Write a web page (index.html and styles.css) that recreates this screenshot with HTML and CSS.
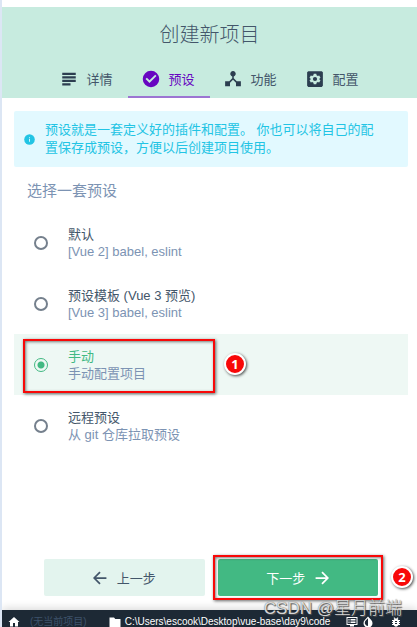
FILE: index.html
```html
<!DOCTYPE html>
<html lang="zh-CN">
<head>
  <meta charset="UTF-8" />
  <meta name="viewport" content="width=device-width, initial-scale=1.0" />
  <title>创建新项目</title>
  <link rel="stylesheet" href="styles.css">
</head>
<body>
  <div class="app">
    <header class="header">
      <h1>创建新项目</h1>
      <nav class="tabs">
        <a class="tab" href="#details">
          <svg viewBox="0 0 24 24"><path d="M3 3.500h18v3H3zM3 8.200h18v3H3zM3 12.900h18v3H3zM3 17.600h11v3H3z"/></svg>
          <span>详情</span>
        </a>
        <a class="tab active" href="#presets">
          <svg viewBox="0 0 24 24"><path d="M12 1a11 11 0 1 0 0 22 11 11 0 0 0 0-22zm-2 16.300l-5.300-5.200 1.800-1.800 3.500 3.400 7.600-7.400 1.700 1.800z"/></svg>
          <span>预设</span>
        </a>
        <a class="tab" href="#features">
          <svg viewBox="0 0 24 24"><path d="M17 15l-4-4V8.500a3.600 3.600 0 1 0-2 0V11l-4 4H1.500v6.500H8V17l4-4 4 4v4.500h6.500V15z"/></svg>
          <span>功能</span>
        </a>
        <a class="tab" href="#config">
          <svg viewBox="0 0 24 24"><path fill-rule="evenodd" d="M3 1.500h18l1.500 1.500v18L21 22.500H3L1.500 21V3zM10.300 5l-.4 2-1.600.9-1.900-.7-1.700 3 1.500 1.300v1l-1.500 1.300 1.700 3 1.900-.7 1.600.9.4 2h3.400l.4-2 1.600-.9 1.900.7 1.700-3-1.500-1.300v-1l1.500-1.300-1.700-3-1.900.7-1.600-.9-.4-2zM12 9.200a2.800 2.800 0 1 1 0 5.600 2.800 2.800 0 0 1 0-5.600z"/></svg>
          <span>配置</span>
        </a>
      </nav>
    </header>

    <main class="content">
      <div class="info">
        <svg viewBox="0 0 24 24"><circle cx="12" cy="12" r="11.500"/><path class="mark" d="M11 7h2v2h-2zM11 11h2v6h-2z"/></svg>
        <p>预设就是一套定义好的插件和配置。 你也可以将自己的配置保存成预设，方便以后创建项目使用。</p>
      </div>

      <h2 id="preset-title">选择一套预设</h2>

      <div class="presets" role="radiogroup" aria-labelledby="preset-title">
        <label class="preset">
          <input type="radio" name="preset">
          <span class="text"><span class="name">默认</span><span class="desc">[Vue 2] babel, eslint</span></span>
        </label>
        <label class="preset">
          <input type="radio" name="preset">
          <span class="text"><span class="name">预设模板 (Vue 3 预览)</span><span class="desc">[Vue 3] babel, eslint</span></span>
        </label>
        <label class="preset selected">
          <input type="radio" name="preset" checked>
          <span class="text"><span class="name">手动</span><span class="desc">手动配置项目</span></span>
          <span class="frame"></span>
          <span class="step">1</span>
        </label>
        <label class="preset">
          <input type="radio" name="preset">
          <span class="text"><span class="name">远程预设</span><span class="desc">从 git 仓库拉取预设</span></span>
        </label>
      </div>
    </main>

    <div class="actions">
      <div class="action">
        <button class="button" type="button">
          <svg viewBox="0 0 24 24"><path d="M23 12H3M12 2L2 12l10 10"/></svg>
          上一步
        </button>
      </div>
      <div class="action">
        <button class="button primary" type="button">
          下一步
          <svg viewBox="0 0 24 24"><path d="M1 12h20M12 2l10 10-10 10"/></svg>
        </button>
        <span class="frame"></span>
        <span class="step">2</span>
      </div>
    </div>

    <footer class="status">
      <svg viewBox="0 0 24 24"><path d="M10 21v-7h4v7h6v-9h3L12 2 1 12h3v9z"/></svg>
      <span class="project">(无当前项目)</span>
      <svg viewBox="0 0 24 24"><path d="M1 3h9l2.500 3H23v16H1z"/></svg>
      <span class="path">C:\Users\escook\Desktop\vue-base\day9\code</span>
      <span class="tools">
        <svg viewBox="0 0 24 24"><path fill-rule="evenodd" d="M1 2h22v16h-7v3H8v-3H1zM3 4v12h18V4zM5 6h2v2H5zM9 6h10v2H9zM5 9h2v2H5zM9 9h10v2H9zM5 12h2v2H5zM9 12h10v2H9z"/></svg>
        <svg viewBox="0 0 24 24"><path fill-rule="evenodd" d="M12 1l6 6.500a9 9 0 1 1-12 0zM12 4.500v15.500a6.500 6.500 0 0 1-4.500-11z"/></svg>
        <svg class="bug" viewBox="0 0 24 24"><path fill-rule="evenodd" d="M20 8h-3l-2-2 2-2-1.500-1.500L13 5h-2L8.500 2.500 7 4l2 2-2 2H4v2h2v2H4v2h2v2H4v2h3q5 7 10 0h3v-2h-2v-2h2v-2h-2v-2h2zM10 10h4v2h-4zM10 14h4v2h-4z"/></svg>
        <svg viewBox="0 0 24 24"><path d="M2 3h20v3H2zM2 9h20v3H2z"/></svg>
      </span>
    </footer>

    <div class="watermark">CSDN @星月前端</div>
  </div>
</body>
</html>
```

FILE: styles.css
```css
:root {
  --green: #42b983;
  --dark: #43566a;
  --muted: #7c93b3;
  --purple: #6806c1;
  --cyan: #22c4e4;
  --red: #f80808;
}

* {
  box-sizing: border-box;
}

body {
  margin: 0;
  font-family: "Liberation Sans", "Noto Sans CJK SC", sans-serif;
  font-size: 13px;
  color: var(--dark);
  background: #fff;
}

h1, h2, p {
  margin: 0;
  font-weight: 400;
}

svg {
  display: block;
  flex: none;
  fill: currentColor;
}

.app {
  position: relative;
  display: flex;
  flex-direction: column;
  height: 100vh;
  padding-top: 7px;
  border-left: 2px solid #dce6f4;
  overflow: hidden;
}

.header {
  background: #c7ebdf;
  padding-top: 12px;
}

.header h1 {
  font-size: 20px;
  font-weight: 300;
  line-height: 32px;
  text-align: center;
}

.tabs {
  display: flex;
  justify-content: center;
  padding-top: 10px;
}

.tab {
  display: flex;
  align-items: center;
  justify-content: center;
  gap: 8px;
  width: 82px;
  height: 37px;
  border-bottom: 2px solid transparent;
  color: var(--dark);
  text-decoration: none;
}

.tab svg {
  width: 18px;
  height: 18px;
  color: #2c3e50;
}

.tab.active,
.tab.active svg {
  color: var(--purple);
}

.tab.active {
  border-color: #9c75d2;
}

.content {
  flex: 1;
  padding: 13px 9px 0 12px;
}

.info {
  display: flex;
  align-items: center;
  gap: 10px;
  padding: 10px 30px 10px 10px;
  border-radius: 2px;
  color: var(--cyan);
  background: #e2f9ff;
}

.info svg {
  width: 11px;
  height: 11px;
}

.info .mark {
  fill: #e2f9ff;
}

.info p {
  line-height: 18px;
}

.content h2 {
  padding: 12px 13px 9px;
  font-size: 15px;
  line-height: 24px;
  color: var(--muted);
}

.preset {
  position: relative;
  display: flex;
  align-items: center;
  gap: 20px;
  height: 61px;
  padding: 0 20px;
}

.preset input {
  appearance: none;
  width: 14px;
  height: 14px;
  margin: 0;
  border: 2px solid #75808d;
  border-radius: 50%;
}

.preset input:checked {
  border: 1px solid var(--green);
  background: radial-gradient(circle, var(--green) 3px, transparent 4px);
}

.preset .text {
  display: flex;
  flex-direction: column;
  line-height: 17px;
}

.desc {
  color: var(--muted);
}

.selected {
  background: #eef8f4;
}

.selected .name {
  color: var(--green);
}

/* red callouts */
.frame {
  position: absolute;
  border: 2px solid var(--red);
  box-shadow: 1px 1px 3px rgba(0, 0, 0, 0.6), inset 1px 1px 3px rgba(0, 0, 0, 0.5);
  pointer-events: none;
}

.step {
  position: absolute;
  width: 22px;
  height: 22px;
  border: 2px solid #fff;
  border-radius: 50%;
  background: var(--red);
  box-shadow: 1px 1px 3px rgba(0, 0, 0, 0.7);
  color: #fff;
  font: bold 13px/18px "Noto Sans", sans-serif;
  text-align: center;
}

.preset .frame {
  top: 5px;
  left: 9px;
  width: 192px;
  height: 54px;
}

.preset .step {
  top: 19px;
  left: 210px;
}

.actions {
  display: flex;
  justify-content: center;
  gap: 13px;
  padding: 0 39px 14px 42px;
}

.action {
  position: relative;
  flex: 1;
  max-width: 200px;
}

.button {
  display: flex;
  align-items: center;
  justify-content: center;
  gap: 10px;
  width: 100%;
  height: 37px;
  border: none;
  border-radius: 2px;
  font: inherit;
  color: var(--dark);
  background: #e3f4ee;
}

.button svg {
  width: 14px;
  height: 14px;
  fill: none;
  stroke: currentColor;
  stroke-width: 3;
}

.button.primary {
  color: #fff;
  background: var(--green);
}

.action .frame {
  inset: -4px -5px;
}

.action .step {
  top: 7px;
  right: -35px;
}

.status {
  display: flex;
  align-items: center;
  height: 17px;
  padding: 7px 0 0 6px;
  font-size: 10px;
  line-height: 10px;
  white-space: nowrap;
  color: #fff;
  background: #1d2935;
  box-shadow: 0 -2px 8px rgba(0, 0, 0, 0.15);
}

.status svg {
  width: 12px;
  height: 12px;
}

.status .project {
  margin: 0 22px 0 10px;
  color: #3d526b;
}

.status .path {
  margin-left: 4px;
}

.tools {
  display: flex;
  gap: 4px;
  margin-left: 16px;
}

.tools .bug {
  margin: 0 10px 0 12px;
}

.watermark {
  position: absolute;
  right: 15px;
  bottom: 8px;
  font-size: 17px;
  font-weight: 300;
  line-height: 20px;
  color: rgba(255, 255, 255, 0.8);
  text-shadow: 0 0 1px #444, 1px 1px 1px #555;
  white-space: nowrap;
}
```
